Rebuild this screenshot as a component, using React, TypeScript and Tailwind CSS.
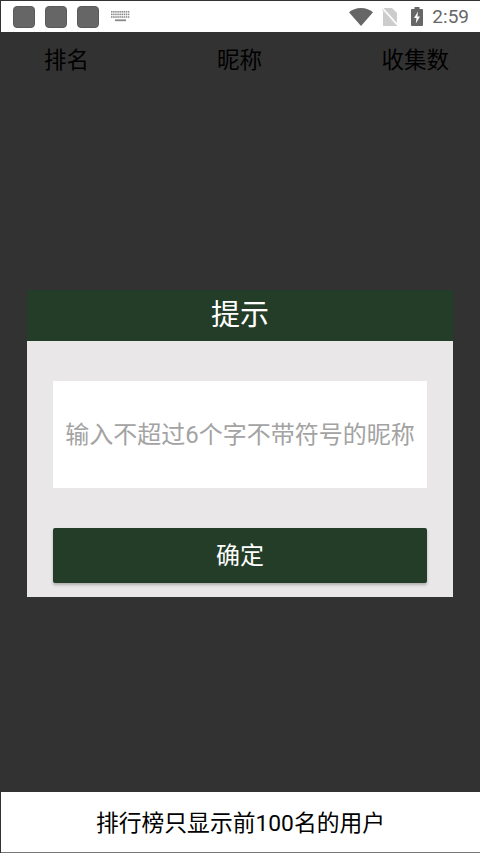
export default function App() {
  const font = "font-['Roboto','Noto_Sans_CJK_SC',sans-serif]";
  const keys = [0, 1, 2, 3, 4, 5, 6, 7, 8];
  return (
    <div className={`h-[853px] w-[480px] overflow-hidden flex flex-col bg-[#323232] border-l border-t border-[#333333] ${font}`}>
      <div className="h-[31px] shrink-0 bg-white flex items-center pl-[12px] pr-[11px]">
        <div className="flex gap-[10px]">
          <div className="w-[22px] h-[22px] rounded-[4px] bg-[#666666] border border-[#5a5a5a]" />
          <div className="w-[22px] h-[22px] rounded-[4px] bg-[#666666] border border-[#5a5a5a]" />
          <div className="w-[22px] h-[22px] rounded-[4px] bg-[#666666] border border-[#5a5a5a]" />
        </div>
        <svg className="ml-[12px]" width="19" height="11" viewBox="0 0 19 11">
          <g fill="#8a8a8a">
            {keys.map((k) => (
              <g key={k}>
                <rect x={k * 2.1} y="0" width="1.5" height="1.6" />
                <rect x={k * 2.1} y="2.6" width="1.5" height="1.6" />
                <rect x={k * 2.1} y="5.2" width="1.5" height="1.6" />
              </g>
            ))}
            <rect x="4" y="8.4" width="11" height="1.8" />
          </g>
        </svg>
        <div className="ml-auto flex items-center">
          <svg width="24" height="18" viewBox="0 0 24 18">
            <path d="M0 4.2C3 1.7 7.2 0 12 0s9 1.7 12 4.2L12 18z" fill="#666666" />
          </svg>
          <svg className="ml-[9px]" width="16" height="18" viewBox="0 0 16 18">
            <path d="M1 0h9l5 5v13H1z" fill="#cccccc" />
            <path d="M0 0l16 18" stroke="#ffffff" strokeWidth="2.2" />
            <path d="M0 1.2l15 16.8" stroke="#cccccc" strokeWidth="1" />
          </svg>
          <svg className="ml-[13px]" width="12" height="19" viewBox="0 0 12 19">
            <path d="M3.5 0h5v2H11a1 1 0 0 1 1 1v15a1 1 0 0 1-1 1H1a1 1 0 0 1-1-1V3a1 1 0 0 1 1-1h2.5z" fill="#666666" />
            <path d="M7 4.5L3 11h2.5l-.7 5.5L9 9.5H6.4z" fill="#ffffff" />
          </svg>
          <span className="ml-[9px] text-[19px] leading-none text-[#666666]">2:59</span>
        </div>
      </div>
      <div className="h-[57px] shrink-0 grid grid-cols-3 items-center pl-[43px] pr-[31px] text-[22.5px] text-black">
        <span className="text-left">排名</span>
        <span className="text-center -ml-[14px]">昵称</span>
        <span className="text-right">收集数</span>
      </div>
      <div className="flex-1 flex flex-col pt-[201px] pl-[26px] pr-[27px]">
        <div className="h-[307px] flex flex-col bg-[#eae7e8]">
          <div className="h-[51px] shrink-0 bg-[#233d28] flex items-center justify-center pt-[1px] text-[29px] text-white">提示</div>
          <div className="flex-1 flex flex-col px-[26px] pt-[40px]">
            <div className="h-[107px] bg-white flex items-center justify-center text-[24px] text-[#a3a3a3]">输入不超过6个字不带符号的昵称</div>
            <div className="mt-[40px] h-[55px] bg-[#233d28] rounded-[2px] shadow-[0_2px_3px_rgba(0,0,0,0.25)] flex items-center justify-center text-[24px] text-white">确定</div>
          </div>
        </div>
      </div>
      <div className="h-[61px] shrink-0 bg-white flex items-center justify-center pt-[4px] text-[22.8px] text-black border-b border-[#777777]">排行榜只显示前100名的用户</div>
    </div>
  );
}
